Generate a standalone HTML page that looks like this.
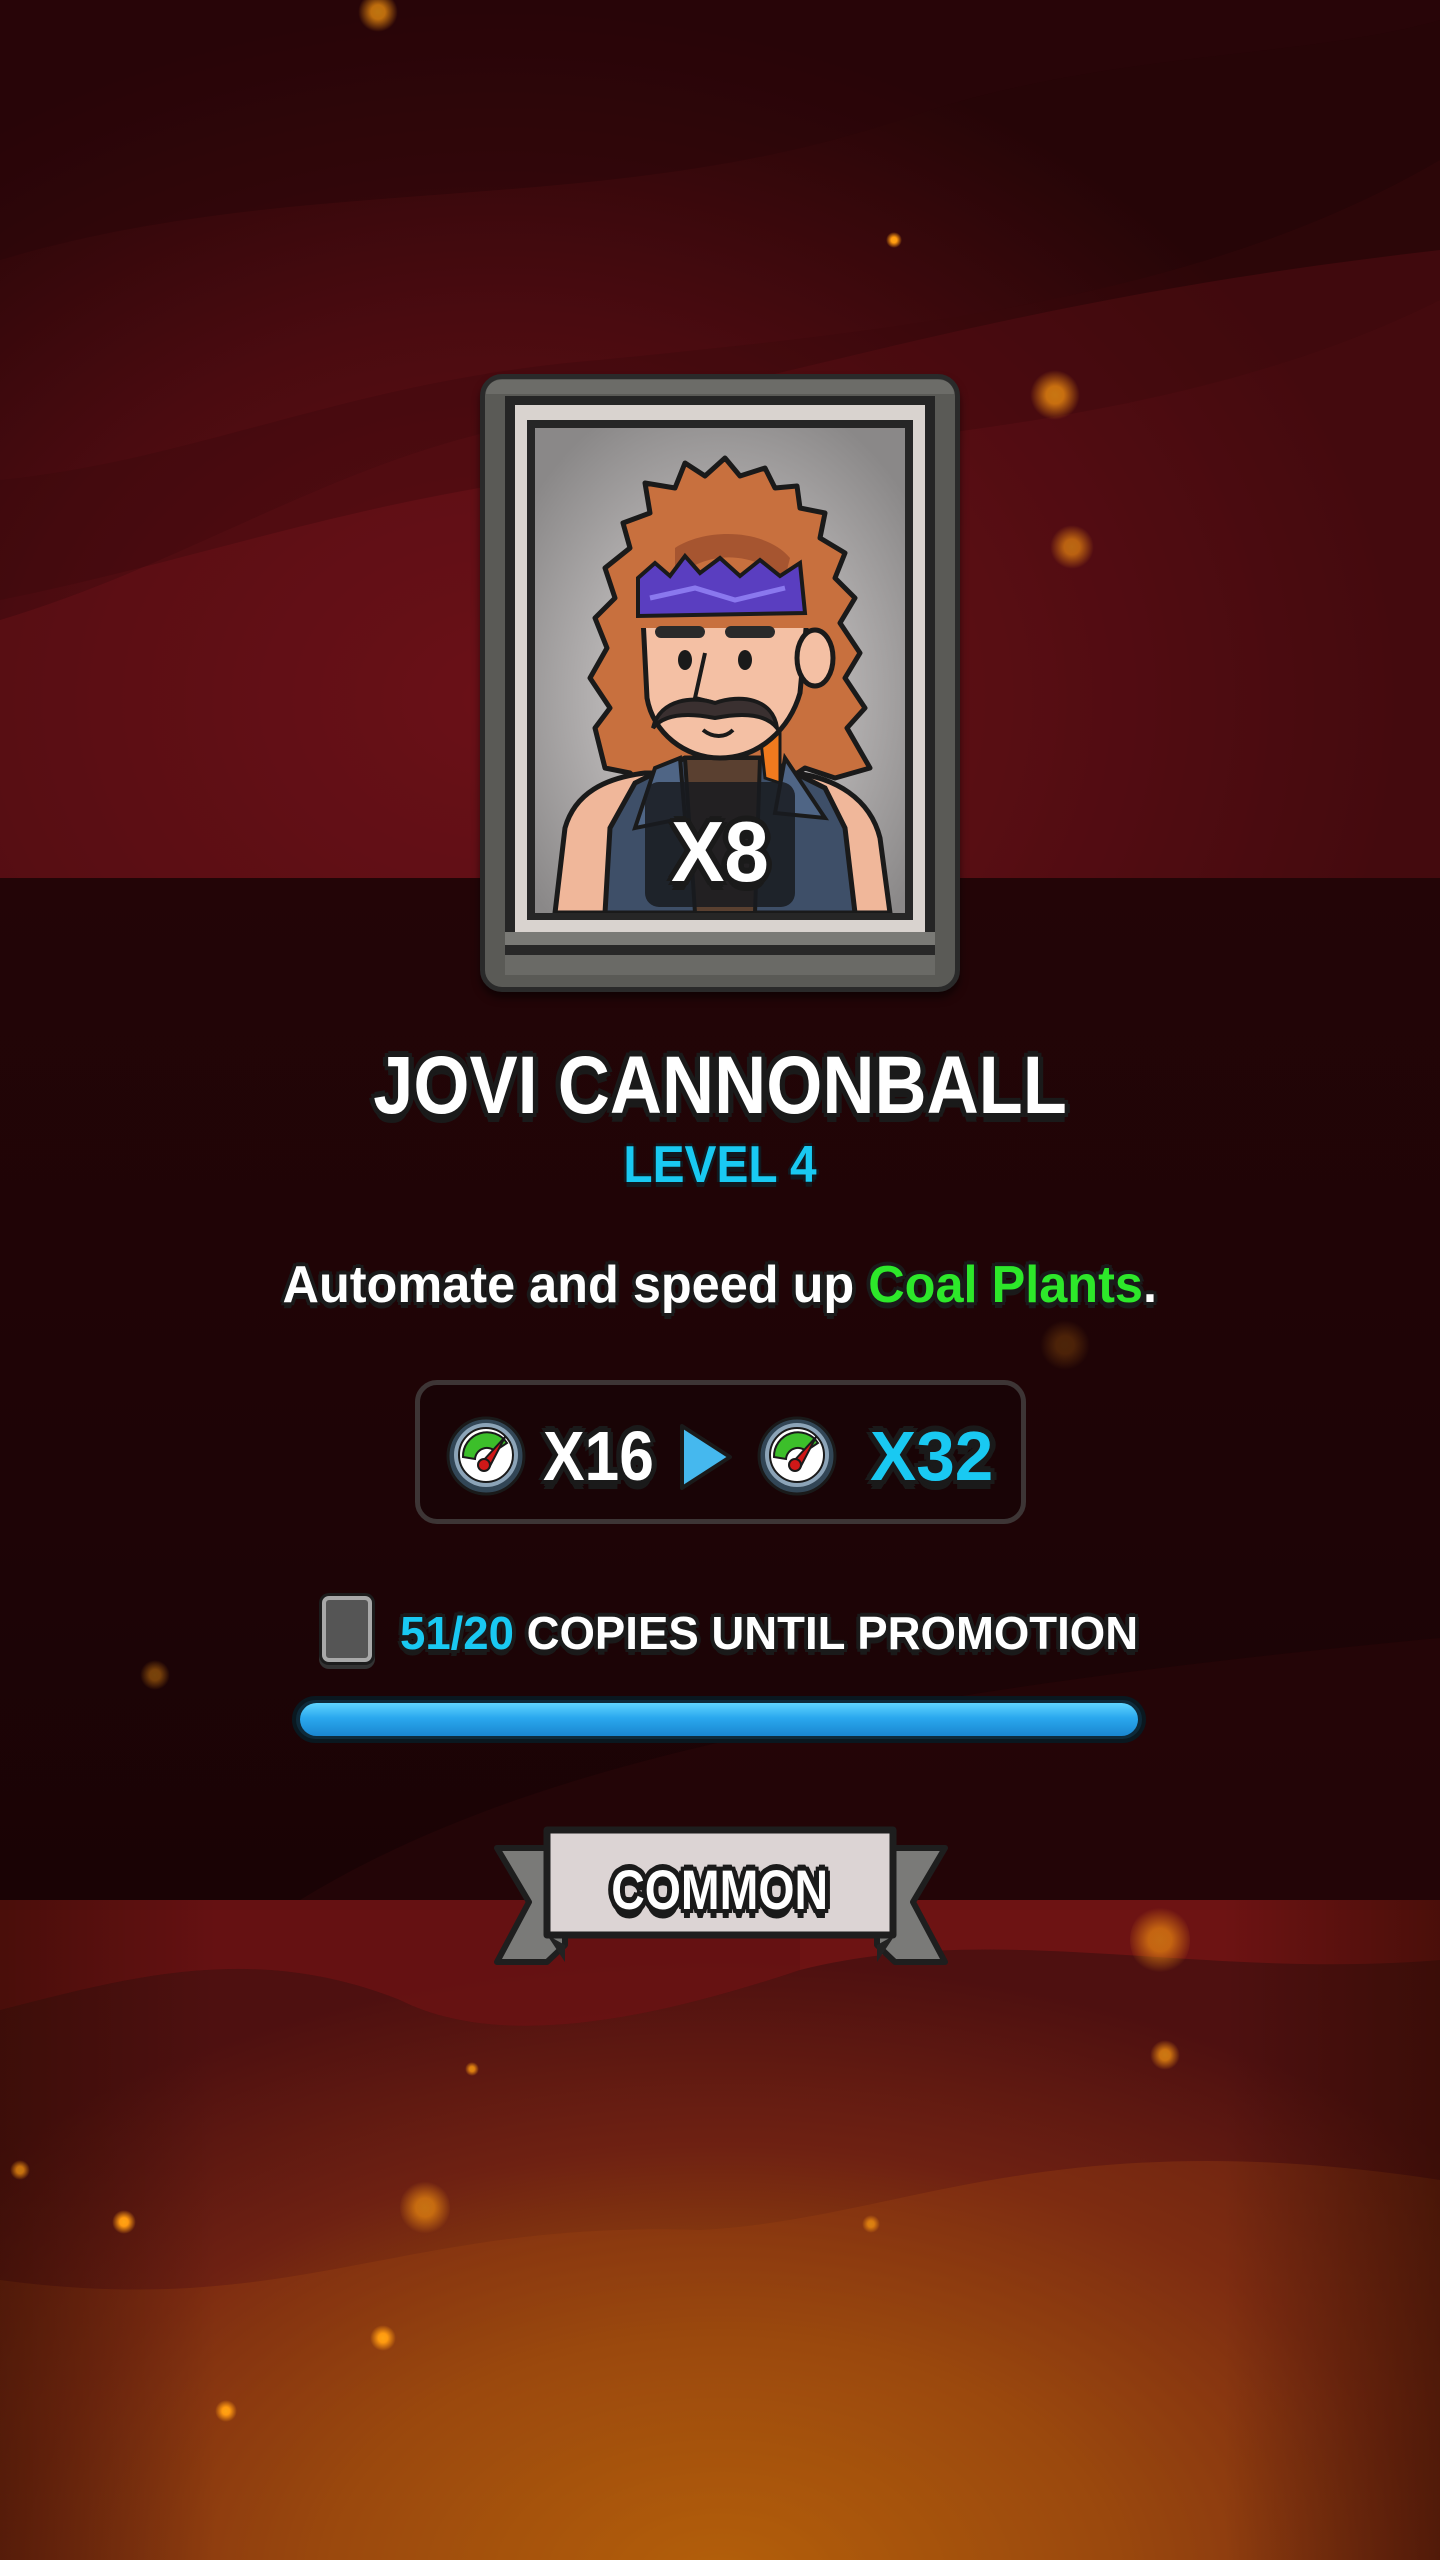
<!DOCTYPE html>
<html><head><meta charset="utf-8"><style>
*{margin:0;padding:0;box-sizing:border-box}
body{width:1440px;height:2560px;overflow:hidden;position:relative;font-family:"Liberation Sans",sans-serif;font-weight:bold;background:#3a0a0e}
.abs{position:absolute}
.t{position:absolute;left:0;width:1440px;text-align:center;white-space:nowrap;line-height:1}
.t span.in{display:inline-block}
.o6{text-shadow:6px 0 #1a1a1a,-6px 0 #1a1a1a,0 6px #1a1a1a,0 -6px #1a1a1a,4px 4px #1a1a1a,-4px 4px #1a1a1a,4px -4px #1a1a1a,-4px -4px #1a1a1a,0 9px #1a1a1a}
.o4{text-shadow:4px 0 #1a1a1a,-4px 0 #1a1a1a,0 4px #1a1a1a,0 -4px #1a1a1a,3px 3px #1a1a1a,-3px 3px #1a1a1a,3px -3px #1a1a1a,-3px -3px #1a1a1a,0 6px #1a1a1a}
.dot{position:absolute;border-radius:50%;background:radial-gradient(circle,#ffa514 0,#ff9a10 25%,rgba(255,150,20,0) 70%)}
</style></head><body>
<div class="abs" style="left:0;top:0;width:1440px;height:880px;background:radial-gradient(ellipse 900px 700px at 500px 700px,#6a1017 0%,#4a0b10 55%,#260507 100%)"></div>
<svg class="abs" style="left:0;top:0" width="1440" height="880">
<path d="M0 260 C300 170 600 220 900 120 C1100 50 1300 60 1440 20 L1440 0 L0 0Z" fill="#2a0609" opacity="0.55"/>
<path d="M0 1050 L0 620 C200 560 350 450 550 420 C800 380 1000 300 1440 250 L1440 880 Z" fill="#6a1118" opacity="0.45"/>
<path d="M0 480 C200 460 350 380 600 360 C900 330 1200 300 1440 160 L1440 300 C1200 420 900 440 600 470 C350 500 200 560 0 600Z" fill="#3a080c" opacity="0.35"/>
</svg>
<div class="abs" style="left:0;top:878px;width:1440px;height:1022px;background:linear-gradient(180deg,#230507,#1e0406 60%,#1a0305)"></div>
<svg class="abs" style="left:0;top:878px" width="1440" height="1022"><path d="M300 1022 C500 900 800 820 1440 760 L1440 1022Z" fill="#2a0709" opacity="0.6"/></svg>
<div class="abs" style="left:0;top:1900px;width:1440px;height:660px;background:radial-gradient(ellipse 1000px 620px at 720px 680px,#c27008 0%,#9a4c0c 40%,#6e2112 70%,#4e1010 100%)"></div>
<svg class="abs" style="left:0;top:1900px" width="1440" height="660">
<path d="M0 0 L1440 0 L1440 60 C1200 80 1000 20 800 70 C650 120 500 150 400 100 C250 40 120 80 0 110Z" fill="#7a1616" opacity="0.7"/>
<path d="M0 110 C120 80 250 40 400 100 C500 150 650 120 800 70 L800 0 L0 0Z" fill="#5a0f12" opacity="0.4"/>
<path d="M0 780 L0 380 C300 420 400 320 700 330 C900 320 1050 220 1440 280 L1440 780Z" fill="#9a4210" opacity="0.35"/>
</svg>
<div class="abs" style="left:0;top:1900px;width:1440px;height:660px;background:linear-gradient(90deg,rgba(40,10,0,.45),rgba(0,0,0,0) 15%,rgba(0,0,0,0) 85%,rgba(40,10,0,.5))"></div>
<div class="dot" style="left:358px;top:-8px;width:40px;height:40px;opacity:.7"></div>
<div class="dot" style="left:886px;top:232px;width:16px;height:16px"></div>
<div class="dot" style="left:1030px;top:370px;width:50px;height:50px;opacity:.7"></div>
<div class="dot" style="left:1050px;top:525px;width:44px;height:44px;opacity:.6"></div>
<div class="dot" style="left:1130px;top:1905px;width:60px;height:70px;opacity:.6"></div>
<div class="dot" style="left:1150px;top:2040px;width:30px;height:30px;opacity:.7"></div>
<div class="dot" style="left:465px;top:2062px;width:14px;height:14px;opacity:.8"></div>
<div class="dot" style="left:10px;top:2160px;width:20px;height:20px;opacity:.7"></div>
<div class="dot" style="left:400px;top:2180px;width:50px;height:55px;opacity:.6"></div>
<div class="dot" style="left:112px;top:2210px;width:24px;height:24px"></div>
<div class="dot" style="left:862px;top:2215px;width:18px;height:18px;opacity:.7"></div>
<div class="dot" style="left:370px;top:2325px;width:26px;height:26px"></div>
<div class="dot" style="left:215px;top:2400px;width:22px;height:22px"></div>
<div class="dot" style="left:140px;top:1660px;width:30px;height:30px;opacity:.4"></div>
<div class="dot" style="left:1040px;top:1320px;width:50px;height:50px;opacity:.2"></div>

<div class="abs" style="left:480px;top:374px;width:480px;height:618px;border-radius:22px;background:#5a5a56;border:5px solid #2a2a2a;box-shadow:0 6px 8px rgba(0,0,0,.5)"></div>
<div class="abs" style="left:486px;top:380px;width:468px;height:14px;border-radius:16px 16px 0 0;background:#6c6c68"></div>
<div class="abs" style="left:505px;top:396px;width:430px;height:540px;background:#252525"></div>
<div class="abs" style="left:515px;top:405px;width:410px;height:527px;background:#d9d3cf"></div>
<div class="abs" style="left:527px;top:420px;width:386px;height:500px;background:#262626"></div>
<div class="abs" style="left:505px;top:932px;width:430px;height:13px;background:#7a7a76"></div>
<div class="abs" style="left:505px;top:945px;width:430px;height:10px;background:#282828"></div>
<div class="abs" style="left:505px;top:955px;width:430px;height:20px;background:#6a6a66"></div>
<svg class="abs" style="left:535px;top:428px" width="370" height="485" viewBox="0 0 370 485">
<defs><radialGradient id="bg" cx="50%" cy="55%" r="65%"><stop offset="0" stop-color="#e0dcdc"/><stop offset="1" stop-color="#8a8888"/></radialGradient></defs>
<rect width="370" height="485" fill="url(#bg)"/>
<path d="M70 340 L60 300 L75 280 L55 250 L72 220 L60 190 L80 170 L70 140 L95 120 L88 95 L115 85 L110 55 L140 60 L150 35 L170 48 L190 30 L205 48 L230 40 L240 60 L262 58 L265 80 L290 85 L285 110 L310 125 L300 150 L320 170 L305 195 L325 225 L310 250 L330 280 L312 300 L335 340 L300 350 L270 340 L240 360 L110 360 L95 345Z" fill="#c8703e" stroke="#1a1a1a" stroke-width="5" stroke-linejoin="round"/>
<path d="M20 485 L30 400 C40 365 70 350 110 345 L260 345 C300 350 335 370 345 410 L355 485Z" fill="#f0b79a" stroke="#1a1a1a" stroke-width="5"/>
<path d="M70 485 L75 400 L100 355 L150 330 L230 330 L290 360 L310 400 L320 485Z" fill="#3e4f68" stroke="#1a1a1a" stroke-width="5"/>
<path d="M120 340 L100 400 L150 390 L145 330Z M250 330 L290 390 L240 385Z" fill="#4f6585" stroke="#1a1a1a" stroke-width="4"/>
<path d="M150 330 L160 485 L220 485 L225 330Z" fill="#5a4030" stroke="#1a1a1a" stroke-width="4"/>
<path d="M225 305 L230 350 L245 355 L245 305Z" fill="#f07a1e" stroke="#1a1a1a" stroke-width="3"/>
<path d="M108 190 L112 270 C118 305 150 330 185 330 C225 330 255 300 265 265 L272 190 Z" fill="#f4c0a4" stroke="#1a1a1a" stroke-width="5"/>
<ellipse cx="280" cy="230" rx="18" ry="28" fill="#f4c0a4" stroke="#1a1a1a" stroke-width="5"/>
<path d="M105 150 L140 130 L150 110 L175 125 L200 105 L215 130 L240 115 L250 140 L280 135 L275 200 L105 200Z" fill="#c8703e"/>
<path d="M140 120 C170 100 230 100 255 130 L250 150 C210 120 170 125 140 150Z" fill="#a65530"/>
<path d="M103 150 L120 135 L135 148 L150 128 L165 145 L185 130 L205 148 L225 132 L245 148 L265 135 L270 185 L103 188Z" fill="#5a3ec0" stroke="#1a1a1a" stroke-width="4"/>
<path d="M115 170 L160 160 L200 172 L250 160" stroke="#8a78ee" stroke-width="5" fill="none"/>
<rect x="120" y="198" width="50" height="12" rx="6" fill="#2a2a2a"/>
<rect x="190" y="198" width="50" height="12" rx="6" fill="#2a2a2a"/>
<ellipse cx="150" cy="232" rx="7" ry="10" fill="#1a1a1a"/>
<ellipse cx="210" cy="232" rx="7" ry="10" fill="#1a1a1a"/>
<path d="M170 225 L160 270 L180 275" stroke="#1a1a1a" stroke-width="4" fill="none"/>
<path d="M118 300 C125 270 160 268 180 275 C205 266 238 270 242 300 C230 285 205 285 180 290 C155 285 130 285 118 300Z" fill="#3a3030" stroke="#1a1a1a" stroke-width="4"/>
<path d="M168 302 C178 310 190 310 198 302" stroke="#1a1a1a" stroke-width="4" fill="none"/>
</svg>
<div class="abs" style="left:645px;top:782px;width:150px;height:125px;border-radius:14px;background:rgba(25,27,32,.85)"></div>
<div class="t o6" style="top:810px;font-size:85px;color:#fff"><span class="in" style="transform:scaleX(.94)">X8</span></div>

<div class="t o6" style="top:1045px;font-size:82px;color:#fff"><span class="in" style="transform:scaleX(.88)">JOVI CANNONBALL</span></div>
<div class="t o4" style="top:1139px;font-size:52px;color:#19c9f2;text-shadow:3px 0 #101a20,-3px 0 #101a20,0 3px #101a20,0 -3px #101a20,0 5px #101a20"><span class="in" style="transform:scaleX(.92)">LEVEL 4</span></div>
<div class="t o4" style="top:1259px;font-size:52px;color:#fff"><span class="in" style="transform:scaleX(.97)">Automate and speed up <span style="color:#2de82a">Coal Plants</span>.</span></div>

<div class="abs" style="left:415px;top:1380px;width:611px;height:144px;border:5px solid #3d3535;border-radius:22px;background:rgba(20,4,6,.5)"></div>
<svg class="abs" style="left:445px;top:1415px" width="82" height="82" viewBox="0 0 82 82">
<circle cx="41" cy="41" r="38" fill="#324656" stroke="#1a1a1a" stroke-width="3"/>
<circle cx="41" cy="40" r="32" fill="#8ca4b8"/>
<circle cx="41" cy="40" r="27" fill="#fff" stroke="#1a1a1a" stroke-width="2"/>
<path d="M18 42 A24 24 0 0 1 62 28 L50 36 A12 12 0 0 0 30 44Z" fill="#3cbf2a" stroke="#1a1a1a" stroke-width="2"/>
<path d="M36 48 L60 22 L44 53Z" fill="#d01818" stroke="#1a1a1a" stroke-width="2"/>
<circle cx="39" cy="50" r="6" fill="#d01818" stroke="#1a1a1a" stroke-width="2"/>
</svg>
<svg class="abs" style="left:756px;top:1415px" width="82" height="82" viewBox="0 0 82 82">
<circle cx="41" cy="41" r="38" fill="#324656" stroke="#1a1a1a" stroke-width="3"/>
<circle cx="41" cy="40" r="32" fill="#8ca4b8"/>
<circle cx="41" cy="40" r="27" fill="#fff" stroke="#1a1a1a" stroke-width="2"/>
<path d="M18 42 A24 24 0 0 1 62 28 L50 36 A12 12 0 0 0 30 44Z" fill="#3cbf2a" stroke="#1a1a1a" stroke-width="2"/>
<path d="M36 48 L60 22 L44 53Z" fill="#d01818" stroke="#1a1a1a" stroke-width="2"/>
<circle cx="39" cy="50" r="6" fill="#d01818" stroke="#1a1a1a" stroke-width="2"/>
</svg>
<div class="abs o6" style="left:543px;top:1421px;font-size:70px;color:#fff;line-height:1;transform:scaleX(.89);transform-origin:0 0">X16</div>
<svg class="abs" style="left:676px;top:1422px" width="60" height="70"><path d="M6 4 L54 35 L6 66Z" fill="#45b8ee" stroke="#1a1a1a" stroke-width="4" stroke-linejoin="round"/></svg>
<div class="abs o6" style="left:870px;top:1421px;font-size:70px;color:#19c9f2;line-height:1;transform:scaleX(.99);transform-origin:0 0">X32</div>

<div class="abs" style="left:322px;top:1596px;width:50px;height:66px;border-radius:7px;background:#555;border:4px solid #a8a8a8;box-shadow:0 0 0 3px #1c1c1c,0 4px 0 3px #333"></div>
<div class="abs o4" style="left:400px;top:1610px;font-size:46px;white-space:nowrap;color:#fff;line-height:1;transform:scaleX(.99);transform-origin:0 0"><span style="color:#19c9f2">51/20</span> COPIES UNTIL PROMOTION</div>
<div class="abs" style="left:292px;top:1696px;width:854px;height:47px;border-radius:24px;background:#0e2a3a;border:4px solid #0a1820"></div>
<div class="abs" style="left:300px;top:1703px;width:838px;height:33px;border-radius:17px;background:linear-gradient(180deg,#5fd4ff 0%,#2aa8ee 45%,#1a86d0 100%)"></div>

<svg class="abs" style="left:485px;top:1820px" width="472" height="150" viewBox="0 0 472 150">
<path d="M12 28 L80 28 L80 125 L62 142 L12 142 L44 82Z" fill="#7a7a78" stroke="#1e1e1e" stroke-width="6" stroke-linejoin="round"/>
<path d="M460 28 L392 28 L392 125 L410 142 L460 142 L428 82Z" fill="#7a7a78" stroke="#1e1e1e" stroke-width="6" stroke-linejoin="round"/>
<path d="M62 115 L80 125 L80 142 Z M410 115 L392 125 L392 142Z" fill="#222"/>
<path d="M62 10 L408 10 L408 115 L62 115Z" fill="#dcd4d4" stroke="#1e1e1e" stroke-width="7" stroke-linejoin="round"/>
</svg>
<div class="t o6" style="top:1862px;font-size:56px;color:#fff"><span class="in" style="transform:scaleX(.83)">COMMON</span></div>
</body></html>
